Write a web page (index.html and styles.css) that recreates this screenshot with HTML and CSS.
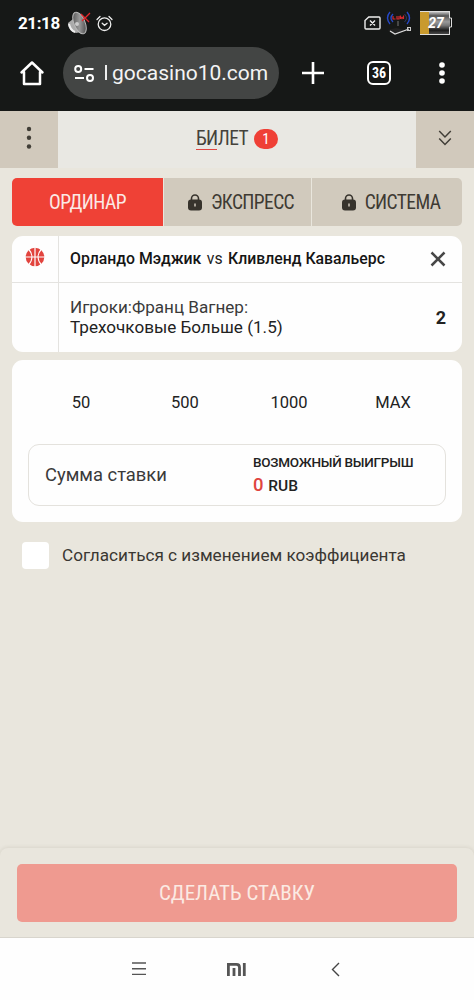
FILE: index.html
```html
<!DOCTYPE html>
<html lang="ru">
<head>
<meta charset="utf-8">
<title>Билет</title>
<link rel="stylesheet" href="styles.css">
</head>
<body>
<div class="chrome">
  <div class="status">
    <span class="clock">21:18</span>
    <svg class="mute" width="24" height="24" viewBox="0 0 24 24">
      <defs><linearGradient id="cone" x1="0" y1="0" x2="1" y2="1"><stop offset="0" stop-color="#444"/><stop offset=".5" stop-color="#999"/><stop offset="1" stop-color="#333"/></linearGradient></defs>
      <path d="M1 12l5-4 8 13-5 1C4 21 1 17 1 12z" fill="#aaa"/>
      <path d="M2 13c1 5 3 7 6 8" stroke="#eee" stroke-width="2" fill="none"/>
      <ellipse cx="12.500" cy="12" rx="5.500" ry="11.500" transform="rotate(-23 12.500 12)" fill="url(#cone)" stroke="#bbb"/>
      <circle cx="10" cy="13" r="2" fill="#ccc"/>
      <path d="M14 3l8 8M23 2l-8 8" stroke="#e3262b" stroke-width="1.300"/>
    </svg>
    <svg class="alarm" width="17" height="17" viewBox="0 0 17 17" fill="none" stroke="#eee" stroke-width="1.300" stroke-linecap="round">
      <circle cx="8.500" cy="9.200" r="6.300"/><path d="M1 4.500l3-3M16 4.500l-3-3M6.200 8.300l2.300 2 2.600-2"/>
    </svg>
    <span class="grow"></span>
    <svg width="17" height="14" viewBox="0 0 17 14" fill="none" stroke="#eee" stroke-width="1.400">
      <path d="M4.800 1H15a1 1 0 0 1 1 1v10a1 1 0 0 1-1 1H2a1 1 0 0 1-1-1V4.500zM6 4.500l5 5M11 4.500l-5 5"/>
    </svg>
    <svg class="signal" width="27" height="26" viewBox="0 0 27 26" fill="none">
      <path d="M5 2q-5 6 0 12M8 4q-4 4 0 8M22 2q5 6 0 12" stroke="#2648c8" stroke-width="1.400"/>
      <path d="M19.500 4q4 4 0 8" stroke="#2a3765"/>
      <path d="M8 6v3h2.500M12 6v3h2V6M15.500 9V6.500l1.500 2 1.500-2V9" stroke="#d52a2f" stroke-width="1.200"/>
      <path d="M13 11v5" stroke="#777"/><path d="M3 20l8-2 9 2-11 5z" fill="#222"/>
      <path d="M5 21l5 3 14-5" stroke="#ddd" stroke-width="1.300"/><rect x="22.500" y="17.500" width="3" height="3" stroke="#ccc"/>
    </svg>
    <svg class="battery" width="32" height="26" viewBox="0 0 32 26">
      <defs><linearGradient id="cell" x1="0" y1="0" x2="0" y2="1"><stop offset="0" stop-color="#ddd"/><stop offset=".2" stop-color="#555"/><stop offset=".45" stop-color="#999"/><stop offset=".6" stop-color="#777"/><stop offset=".8" stop-color="#1b1b1b"/><stop offset="1" stop-color="#555"/></linearGradient></defs>
      <rect x="0" y="1" width="30" height="24" fill="url(#cell)"/><rect x="0" y="1" width="9" height="24" fill="#c99a2e"/>
      <path d="M0 1.500h30M0 24.500h30M29.500 1v7h2v9h-2v8" stroke="#ddd" fill="none"/>
      <text x="16" y="18" text-anchor="middle" class="charge">27</text>
    </svg>
  </div>
  <div class="toolbar">
    <svg class="home" width="26" height="26" viewBox="0 0 26 26" fill="none" stroke="#fff" stroke-width="2.500" stroke-linejoin="round" stroke-linecap="round"><path d="M2.500 12.500L13 2.500l10.500 10M5 12v12h16V12"/></svg>
    <div class="address">
      <svg width="20" height="17" viewBox="0 0 20 17" fill="none" stroke="#fff" stroke-width="2"><circle cx="4.200" cy="4" r="3"/><path d="M10.500 4h9M1 13h9"/><circle cx="16" cy="13" r="3"/></svg>
      <span class="url"><i class="cut"></i>gocasino10.com</span>
    </div>
    <svg class="plus" width="22" height="22" viewBox="0 0 22 22" stroke="#fff" stroke-width="2.600"><path d="M11 0v22M0 11h22"/></svg>
    <span class="tabs narrow">36</span>
    <svg class="more" width="8" height="24" viewBox="0 0 8 24" fill="#fff"><circle cx="4" cy="4" r="2.800"/><circle cx="4" cy="12" r="2.800"/><circle cx="4" cy="20" r="2.800"/></svg>
  </div>
</div>
<header class="head">
  <div class="side left"><svg width="6" height="24" viewBox="0 0 6 24" fill="#413e37"><circle cx="3" cy="3" r="2.200"/><circle cx="3" cy="11.700" r="2.200"/><circle cx="3" cy="20.500" r="2.200"/></svg></div>
  <div class="ticket"><span class="narrow ticket-name">БИЛЕТ</span><span class="count narrow">1</span></div>
  <div class="side right"><svg width="14" height="16" viewBox="0 0 14 16" fill="none" stroke="#413e37" stroke-width="1.500"><path d="M1.200 1l5.800 6 5.800-6M1.200 8.500l5.800 6 5.800-6"/></svg></div>
</header>
<main class="slip">
  <nav class="modes narrow">
    <div class="mode active"><span>ОРДИНАР</span></div>
    <div class="mode"><svg width="14" height="17" viewBox="0 0 14 17"><path d="M3.500 8V4.500a3.500 3.500 0 0 1 7 0V8" fill="none" stroke="#37332c" stroke-width="1.600"/><rect y="5.500" width="14" height="11" rx="3" fill="#37332c"/><path d="M7 9.500v3" stroke="#d1cabd" stroke-width="1.500"/></svg><span>ЭКСПРЕСС</span></div>
    <div class="mode"><svg width="14" height="17" viewBox="0 0 14 17"><path d="M3.500 8V4.500a3.500 3.500 0 0 1 7 0V8" fill="none" stroke="#37332c" stroke-width="1.600"/><rect y="5.500" width="14" height="11" rx="3" fill="#37332c"/><path d="M7 9.500v3" stroke="#d1cabd" stroke-width="1.500"/></svg><span>СИСТЕМА</span></div>
  </nav>
  <section class="card bet">
    <div class="sport"><svg width="20" height="20" viewBox="0 0 20 20"><circle cx="10" cy="10" r="9.300" fill="#e2443e"/><path d="M10 0v20M0 10h20M3.500 2c4.500 5 4.500 11 0 16M16.500 2c-4.500 5-4.500 11 0 16" fill="none" stroke="#fff" stroke-width="1.200"/></svg></div>
    <div class="match"><span class="teams"><b>Орландо Мэджик</b> <span class="vs">vs</span> <b>Кливленд Кавальерс</b></span><svg width="16" height="16" viewBox="0 0 16 16" stroke="#474747" stroke-width="2.500"><path d="M1.500 1.500l13 13M14.500 1.500l-13 13"/></svg></div>
    <div class="blank"></div>
    <div class="pick"><div class="outcome"><span class="market">Игроки:Франц Вагнер:</span><br>Трехочковые Больше (1.5)</div><b class="odds">2</b></div>
  </section>
  <section class="card stake">
    <div class="presets"><span>50</span><span>500</span><span>1000</span><span>MAX</span></div>
    <div class="amount"><span class="label">Сумма ставки</span><div class="win"><div class="win-title">ВОЗМОЖНЫЙ ВЫИГРЫШ</div><div class="win-sum"><span class="zero">0</span> RUB</div></div></div>
  </section>
  <div class="agree"><span class="box"></span><span class="agree-text">Согласиться с изменением коэффициента</span></div>
</main>
<footer class="submit"><div class="button narrow"><span>СДЕЛАТЬ СТАВКУ</span></div></footer>
<div class="navbar">
  <svg width="14" height="14" viewBox="0 0 14 14" stroke="#555" stroke-width="1.400"><path d="M0 1h14M0 6.700h14M0 12.400h14"/></svg>
  <svg class="mi" width="19" height="13" viewBox="0 0 19 13" fill="none" stroke="#555" stroke-width="2.800"><path d="M1.400 13V1.400h8.100q3 0 3 3V13M7 5v8M17.300 0v13"/></svg>
  <svg class="back" width="9" height="15" viewBox="0 0 9 15" fill="none" stroke="#444" stroke-width="1.400"><path d="M8 1L1.500 7.500 8 14"/></svg>
</div>
</body>
</html>
```
FILE: styles.css
```css
* { box-sizing: border-box; }
body { margin: 0; width: 474px; height: 1000px; display: flex; flex-direction: column; background: #e9e6dd; font-family: Roboto, "Noto Sans", sans-serif; color: #222; overflow: hidden; }
svg { flex: none; display: block; }
.narrow { font-family: "Roboto Condensed", Roboto, sans-serif; font-stretch: 75%; }
.chrome { height: 111px; background: #161817; flex: none; }
.status { height: 46px; display: flex; align-items: center; padding: 0 22px 0 18px; }
.clock { color: #fff; font-size: 17px; font-weight: 700; width: 49px; letter-spacing: -0.4px; }
.alarm { margin-left: 5px; }
.grow { flex: 1; }
.signal { margin-left: 4px; margin-right: 8px; }
.charge { font: italic 700 14px Roboto, sans-serif; fill: #fff; }
.toolbar { height: 54px; display: flex; align-items: center; padding-left: 19px; }
.address { width: 216px; height: 52px; margin-left: 18px; border-radius: 26px; background: #434544; display: flex; align-items: center; padding-left: 11px; }
.url { margin-left: 11px; font-size: 21px; color: #f4f4f4; white-space: nowrap; }
.cut { display: inline-block; width: 2px; height: 15px; background: #eee; margin-right: 5px; }
.plus { margin-left: 23px; }
.tabs { margin-left: 43px; width: 24px; height: 24px; border: 2.500px solid #fff; border-radius: 6px; color: #fff; font-size: 14px; font-weight: 700; display: flex; align-items: center; justify-content: center; }
.more { margin-left: 47px; }
.head { display: flex; height: 57px; flex: none; }
.side { width: 58px; background: #d1c9bc; display: flex; align-items: center; justify-content: center; padding-bottom: 3px; }
.ticket { flex: 1; background: #e9e8e3; display: flex; align-items: center; justify-content: center; font-size: 19.500px; color: #45423b; padding-bottom: 1px; }
.ticket-name { letter-spacing: -0.6px; line-height: 22px; background: linear-gradient(#e04540, #e04540) 0 100% / 21px 1px no-repeat; }
.count { margin-left: 6px; width: 24px; height: 20px; border-radius: 10px; background: #ef4036; color: #fff; font-size: 15px; line-height: 20px; text-align: center; }
.slip { flex: 1; padding: 10px 12px 0; }
.modes { display: grid; grid-template-columns: 151px 147px 150px; gap: 1px; height: 48px; font-size: 19.500px; letter-spacing: -0.6px; }
.mode { background: #d1cabd; display: flex; align-items: center; justify-content: center; gap: 9px; color: #3e3a33; padding-left: 7px; }
.mode:last-child { border-radius: 0 5px 5px 0; padding-left: 8px; }
.mode.active { background: #ef4136; color: #fbe9e5; border-radius: 5px 0 0 5px; padding: 0; }
.card { background: #fefefe; border-radius: 11px; }
.bet { margin-top: 10px; height: 116px; display: grid; grid-template: 47px 69px / 47px 403px; }
.sport { border-right: 1px solid #e4e3e0; border-bottom: 1px solid #e4e3e0; display: flex; align-items: center; justify-content: center; padding-bottom: 4px; }
.match { border-bottom: 1px solid #e4e3e0; display: flex; justify-content: space-between; align-items: center; padding: 0 16px 1px 11px; }
.teams { font-size: 15.800px; white-space: nowrap; }
.teams b { font-weight: 500; color: #151515; }
.vs { margin: 0 1.500px; }
.blank { border-right: 1px solid #e4e3e0; }
.pick { display: flex; justify-content: space-between; align-items: center; padding: 0 16px 0 11px; }
.outcome { font-size: 17.100px; line-height: 20px; white-space: nowrap; padding-bottom: 1px; }
.market { color: #3a3a3a; }
.odds { font-size: 18px; }
.stake { margin-top: 8px; height: 162px; padding: 0 16px; }
.presets { display: grid; grid-template-columns: repeat(4, 104px); height: 84px; padding-left: 1px; align-items: center; text-align: center; font-size: 16.500px; }
.amount { height: 62px; border: 1px solid #e4e2dd; border-radius: 11px; display: grid; grid-template-columns: 208px 1fr; align-items: center; padding-left: 16px; }
.label { font-size: 18.400px; color: #3a3a3a; padding-bottom: 2px; }
.win-title { font-size: 13.500px; font-weight: 500; line-height: 20px; letter-spacing: -0.25px; white-space: nowrap; }
.win-sum { font-size: 15.500px; font-weight: 500; line-height: 26px; }
.zero { font-size: 18.500px; color: #e0453e; margin-right: 1px; }
.agree { display: flex; align-items: center; margin: 20px 0 0 10px; }
.box { width: 27px; height: 27px; border-radius: 4px; background: #fff; }
.agree-text { margin-left: 13px; font-size: 17.150px; color: #3a3732; white-space: nowrap; padding-bottom: 2px; }
.submit { height: 89px; flex: none; padding: 16px 17px 15px; border-radius: 8px 8px 0 0; background: #e9e6dd; box-shadow: 0 0 4px rgba(80, 70, 50, .15); }
.button { height: 58px; border-radius: 5px; background: #ef9a90; color: #fbeae3; font-size: 21px; display: flex; align-items: center; justify-content: center; }
.navbar { height: 63px; flex: none; border-top: 1px solid #d8d5cd; background: #fefefe; display: flex; align-items: center; padding-left: 132px; }
.mi { margin-left: 81px; }
.back { margin-left: 85px; }
```
